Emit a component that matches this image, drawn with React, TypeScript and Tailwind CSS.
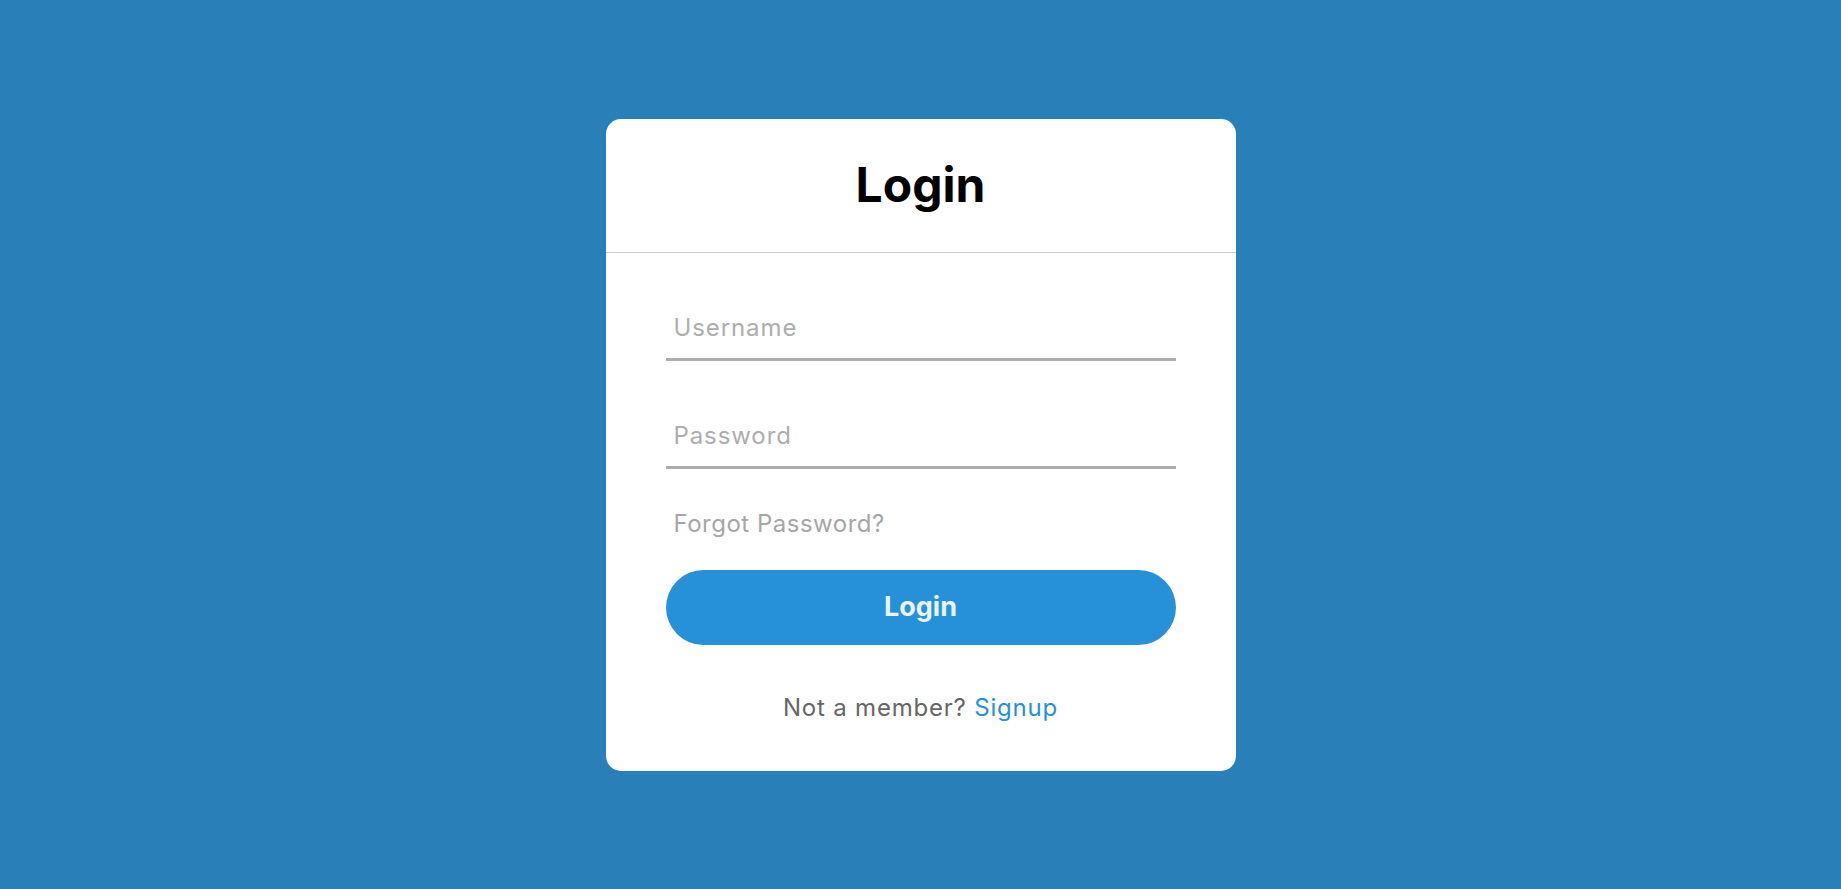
import { useState } from "react";

// Centered login card on a flat blue page.
// Sizes are the usual 400px tutorial card at ~1.5x zoom.

const font = { fontFamily: "Inter, 'Open Sans', 'Liberation Sans', sans-serif" };

function Field({ label, type }: { label: string; type: string }) {
  const [value, setValue] = useState("");
  return (
    <div className="relative border-b-[3px] border-[#adadad]">
      <input
        type={type}
        value={value}
        onChange={(e) => setValue(e.target.value)}
        className="h-[60px] w-full bg-transparent px-[8px] text-[24px] outline-none"
      />
      {!value && (
        <label className="pointer-events-none absolute left-[8px] top-1/2 -translate-y-1/2 text-[24px] tracking-[0.9px] text-[#adadad]">
          {label}
        </label>
      )}
    </div>
  );
}

export default function App() {
  return (
    <div
      className="flex min-h-screen items-center justify-center bg-[#2980b9]"
      style={font}
    >
      <div className="w-[630px] rounded-[15px] bg-white">
        <div className="flex h-[134px] items-center justify-center border-b border-[#cfcfcf]">
          <h1 className="text-[48px] font-bold text-black">Login</h1>
        </div>

        <form className="px-[60px]" onSubmit={(e) => e.preventDefault()}>
          <div className="pt-[45px]">
            <Field label="Username" type="text" />
          </div>
          <div className="pt-[45px]">
            <Field label="Password" type="password" />
          </div>

          <div className="mt-[37px] ml-[8px] h-[36px] cursor-pointer text-[24px] leading-[36px] tracking-[0.5px] text-[#a6a6a6]">
            Forgot Password?
          </div>

          <button
            type="submit"
            className="mt-[28px] h-[75px] w-full rounded-full bg-[#2691d9] text-[27px] font-bold text-[#e9f4fb]"
          >
            Login
          </button>

          <div className="pt-[45px] pb-[45px] text-center text-[24px] leading-[36px] tracking-[0.8px] text-[#666666]">
            Not a member?{" "}
            <a href="#" className="text-[#2691d9]">
              Signup
            </a>
          </div>
        </form>
      </div>
    </div>
  );
}
